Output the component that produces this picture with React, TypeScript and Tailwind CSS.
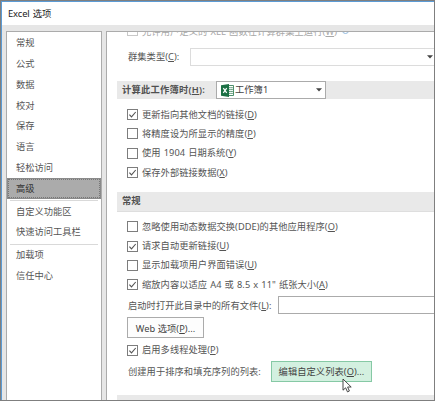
import type { ReactNode } from 'react'

const SIDEBAR_GROUPS = [
  ['常规', '公式', '数据', '校对', '保存', '语言', '轻松访问', '高级'],
  ['自定义功能区', '快速访问工具栏'],
  ['加载项', '信任中心'],
]

const WORKBOOK_OPTIONS = [
  { label: '更新指向其他文档的链接', hotkey: 'D', checked: true },
  { label: '将精度设为所显示的精度', hotkey: 'P', checked: false },
  { label: '使用 1904 日期系统', hotkey: 'Y', checked: false },
  { label: '保存外部链接数据', hotkey: 'X', checked: true },
]

const GENERAL_OPTIONS = [
  { label: '忽略使用动态数据交换(DDE)的其他应用程序', hotkey: 'O', checked: false },
  { label: '请求自动更新链接', hotkey: 'U', checked: true },
  { label: '显示加载项用户界面错误', hotkey: 'U', checked: false },
  { label: '缩放内容以适应 A4 或 8.5 x 11" 纸张大小', hotkey: 'A', checked: true },
]

function Hotkey({ children }: { children: ReactNode }) {
  return (
    <>
      (<span className="underline underline-offset-1">{children}</span>)
    </>
  )
}

function CheckRow({ label, hotkey, checked }: { label: string; hotkey: string; checked: boolean }) {
  return (
    <div className="flex h-[19.3px] shrink-0 items-center pl-[10px]">
      <span className="flex size-[11px] shrink-0 items-center justify-center border border-[#7d7d7d] bg-white">
        {checked && (
          <svg viewBox="0 0 9 9" className="size-[9px]" fill="none" stroke="#555" strokeWidth="1.1">
            <path d="M1.4 4.6 3.5 6.9 7.7 2" />
          </svg>
        )}
      </span>
      <span className="ml-[4px]">
        {label}
        <Hotkey>{hotkey}</Hotkey>
      </span>
    </div>
  )
}

function Caret() {
  return (
    <svg viewBox="0 0 6 4" className="h-[4px] w-[6px]">
      <path d="M0 .3h6L3 3.6z" fill="#444" />
    </svg>
  )
}

function ExcelIcon() {
  return (
    <svg viewBox="0 0 13 13" className="size-[13px] shrink-0">
      <path d="M7 1.5h5.5v10H7z" fill="#fff" stroke="#217346" strokeWidth=".8" />
      <path d="M8.3 3.7h1.3M10.3 3.7h1.3M8.3 5.6h1.3M10.3 5.6h1.3M8.3 7.5h1.3M10.3 7.5h1.3M8.3 9.4h1.3M10.3 9.4h1.3" stroke="#217346" strokeWidth="1" />
      <path d="M0 1.2 8 0v13L0 11.8z" fill="#1b7044" />
      <path d="M2.3 4.2 5.7 8.9M5.7 4.2 2.3 8.9" stroke="#fff" strokeWidth="1.2" />
    </svg>
  )
}

function Sidebar() {
  return (
    <nav className="flex w-[96px] shrink-0 flex-col border border-b-0 border-[#ababab] bg-white pt-[1px]">
      {SIDEBAR_GROUPS.map((group, i) => (
        <div key={group[0]}>
          {i > 0 && <div className="mx-[3px] mt-[1px] h-px bg-[#d9d9d9]" />}
          {group.map((item) =>
            item === '高级' ? (
              <div
                key={item}
                className="flex h-[21px] items-center border border-[#8a8a8a] bg-[#ababab] pl-[8px] text-[#333] outline-1 -outline-offset-2 outline-dotted outline-[#777]"
              >
                {item}
              </div>
            ) : (
              <div key={item} className="flex h-[20.75px] items-center pl-[9px]">
                {item}
              </div>
            ),
          )}
        </div>
      ))}
    </nav>
  )
}

export default function App() {
  return (
    <div className="h-[401px] w-[435px] overflow-hidden border border-[#7f7f7f] bg-[#e6e6e6] font-['Noto_Sans','Noto_Sans_CJK_SC',sans-serif] text-[9.25px] leading-[14px] whitespace-nowrap text-[#555] [word-spacing:0.6px]">
      <div className="flex h-full flex-col border-t border-l border-[#5b9bd5]">
        <header className="flex h-[23px] shrink-0 items-center bg-white pl-[6px] text-[9.4px] tracking-[-0.1px] text-[#222]">
          Excel 选项
        </header>

        <div className="flex min-h-0 flex-1 gap-[4px] pt-[6px] pl-[4px]">
          <Sidebar />

          <main className="flex min-w-0 flex-1 flex-col overflow-hidden border-t border-l border-[#ababab] bg-white pl-[10px] tracking-[0.06px]">
            {/* Row scrolled partly out of view */}
            <div className="-mt-[7px] flex h-[15px] shrink-0 items-center pl-[10px] tracking-[0.1px] text-[#a8a8a8]">
              <span className="-mt-[4px] size-[11px] shrink-0 border border-[#c8c8c8]" />
              <span className="-mt-[1px] ml-[4px]">
                允许用户定义的 XLL 函数在计算群集上运行
                <Hotkey>W</Hotkey>
              </span>
              <span className="-mt-[4px] ml-[5px] size-[7px] rounded-full border border-[#8fb8de]" />
            </div>

            <div className="mt-[8px] flex h-[18px] shrink-0 items-center pl-[11px]">
              <span className="w-[62px]">
                群集类型<Hotkey>C</Hotkey>:
              </span>
              <div className="flex h-[18px] flex-1 items-center justify-end border border-r-0 border-[#dcdcdc] pr-[1px]">
                <Caret />
              </div>
            </div>

            <div className="mt-[15px] flex h-[18px] shrink-0 items-center bg-[#e9e9e9] pl-[5px] font-semibold text-[#505050]">
              <span className="w-[94px] tracking-[0.25px]">
                计算此工作簿时<Hotkey>H</Hotkey>:
              </span>
              <div className="flex h-[18px] w-[110px] items-center border border-[#ababab] bg-white pr-[3px] pl-[4px] font-normal text-[#444]">
                <ExcelIcon />
                <span className="ml-[1px] flex-1">工作簿1</span>
                <Caret />
              </div>
            </div>

            <div className="mt-[6px] flex shrink-0 flex-col">
              {WORKBOOK_OPTIONS.map((o) => (
                <CheckRow key={o.hotkey} {...o} />
              ))}
            </div>

            <div className="mt-[10px] flex h-[20px] shrink-0 items-center border-b border-[#dedede] bg-[#e9e9e9] pb-[2px] pl-[5px] font-semibold text-[#505050]">
              常规
            </div>

            <div className="mt-[5px] flex shrink-0 flex-col">
              {GENERAL_OPTIONS.map((o) => (
                <CheckRow key={o.label} {...o} />
              ))}
            </div>

            <div className="mt-[2px] flex h-[18px] shrink-0 items-center pl-[11px]">
              <span className="w-[150px] pt-[2px]">
                启动时打开此目录中的所有文件<Hotkey>L</Hotkey>:
              </span>
              <div className="h-[18px] flex-1 border border-r-0 border-[#ababab]" />
            </div>

            <button className="mt-[3px] ml-[10px] flex h-[21px] w-[77px] shrink-0 items-center justify-center border border-[#ababab] bg-[#fdfdfd] pt-[2px] text-[#444]">
              <span>
                Web 选项<Hotkey>P</Hotkey>...
              </span>
            </button>

            <div className="mt-[2px]">
              <CheckRow label="启用多线程处理" hotkey="P" checked />
            </div>

            <div className="mt-[1px] flex h-[21px] shrink-0 items-center pl-[11px]">
              <span className="w-[143px] pt-[2px]">创建用于排序和填充序列的列表:</span>
              <button className="relative flex h-[21px] w-[101px] items-center justify-center border border-[#86c9a5] bg-[#d3f0e0] pt-[1px] text-[#444]">
                <span>
                  编辑自定义列表<Hotkey>O</Hotkey>...
                </span>
                <svg viewBox="0 0 10 15" className="absolute top-[16px] left-[70px] h-[15px] w-[10px]">
                  <path d="M1 1v11.2l2.6-2.4 1.9 4.1 1.9-.9-1.8-4h3.6z" fill="#fff" stroke="#333" strokeWidth=".9" />
                </svg>
              </button>
            </div>

            <div className="mt-[13px] h-[10px] shrink-0 bg-[#e9e9e9]" />
          </main>
        </div>
      </div>
    </div>
  )
}
